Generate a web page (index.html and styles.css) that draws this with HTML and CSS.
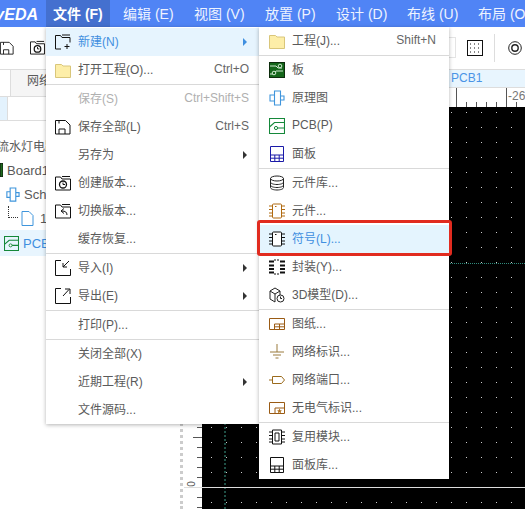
FILE: index.html
```html
<!DOCTYPE html>
<html lang="zh-CN">
<head>
    <meta charset="UTF-8">
    <meta name="viewport" content="width=device-width, initial-scale=1.0">
    <title>EasyEDA</title>
    <link rel="stylesheet" href="styles.css">
</head>
<body>
    <svg class="defs" width="0" height="0">
        <symbol id="i-folder" viewBox="0 0 16 16"><path d="M.5 2.500h6l1.500 1.500h7.500v11.500H.5z" fill="#fdeea8" stroke="#d9c67a"/></symbol>
        <symbol id="i-save" viewBox="0 0 16 16"><path d="M.5 1.500h10l4.500 4.500v9H.5zM4 15v-5h6v5M4 1.500v3" fill="#fff" stroke="#111"/></symbol>
        <symbol id="i-clock" viewBox="0 0 16 16"><path d="M.5 15V2h5l1.500 2h8.500v11zM7 1.500h8" fill="#fff" stroke="#111"/><circle cx="8" cy="9.500" r="3.500" fill="none" stroke="#111" stroke-width="1.300"/><path d="M8 7.500v2h2" fill="none" stroke="#111"/></symbol>
        <symbol id="i-chip" viewBox="0 0 16 16"><rect x="3.500" y="1" width="9" height="14" rx="1" fill="#fff" stroke="currentColor"/><path d="M0 3h3M0 6.500h3M0 10h3M0 13h3M13 3h3M13 6.500h3M13 10h3M13 13h3M6 3.500h1.500" fill="none" stroke="currentColor"/></symbol>
    </svg>

    <div class="topbar">
        <div class="logo"><span>EasyEDA</span></div>
        <div class="nav-item active">文件 (F)</div>
        <div class="nav-item">编辑 (E)</div>
        <div class="nav-item">视图 (V)</div>
        <div class="nav-item">放置 (P)</div>
        <div class="nav-item">设计 (D)</div>
        <div class="nav-item">布线 (U)</div>
        <div class="nav-item">布局 (O)</div>
    </div>

    <div class="toolbar">
        <svg class="tool" width="14" height="14"><use href="#i-save"/></svg>
        <svg class="tool tool-clock" width="15" height="15"><use href="#i-clock"/></svg>
        <div class="tool-input"></div>
        <svg class="tool tool-grid" width="16" height="16" viewBox="0 0 16 16"><rect x=".5" y=".5" width="15" height="15" fill="#fff" stroke="#111"/><path d="M3 4h2M7 4h2M11 4h2M3 8h2M7 8h2M11 8h2M3 12h2M7 12h2M11 12h2" stroke="#111" stroke-dasharray="1 1"/></svg>
        <div class="tool-sep"></div>
        <svg class="tool" width="14" height="14" viewBox="0 0 14 14"><circle cx="7" cy="7" r="6.300" fill="none" stroke="#222"/><circle cx="7" cy="7" r="3.200" fill="none" stroke="#222" stroke-width="1.400"/></svg>
    </div>

    <div class="main">
        <div class="side">
            <div class="side-tabs"><div class="side-tab">网络</div></div>
            <div class="side-search"><div class="search-mark"></div><div class="search-box"></div></div>
            <div class="tree">
                <div class="tree-row tree-title">流水灯电路</div>
                <div class="tree-row tree-board">
                    <svg width="3" height="14" viewBox="0 0 3 14"><rect width="3" height="14" fill="#1d6b1d" stroke="#111"/></svg>
                    <span>Board1</span>
                </div>
                <div class="tree-row tree-sch">
                    <svg class="blue-icon" width="15" height="15" viewBox="0 0 16 16"><path d="M5.500 1h6v14h-6zM5.500 5H2v6h3.500M11.500 6H15v4h-3.500" fill="none" stroke="currentColor" stroke-width="1.200"/></svg>
                    <span>Schematic1</span>
                </div>
                <div class="tree-row tree-page">
                    <span class="tree-link"></span>
                    <svg class="blue-icon" width="13" height="15" viewBox="0 0 13 15"><path d="M1 .5h7l4 4v10H1z" fill="none" stroke="currentColor"/></svg>
                    <span>1.P1</span>
                </div>
                <div class="tree-row tree-pcb">
                    <svg class="green-icon" width="15" height="15" viewBox="0 0 16 16"><path d="M.5.500h15v15H.5zM.5 9l5-4.500h10M6 10h9.500" fill="none" stroke="currentColor" stroke-width="1.200"/><circle cx="7" cy="10" r="1.600" fill="#fff" stroke="currentColor"/></svg>
                    <span>PCB1</span>
                </div>
            </div>
        </div>

        <div class="work">
            <div class="doc-tabs"><div class="doc-tab">PCB1</div></div>
            <div class="h-ruler"><span class="h-label">-26</span></div>
            <div class="work-body">
                <div class="v-ruler"></div>
                <div class="canvas"></div>
                <div class="line-teal-h"></div>
                <div class="line-teal-v"></div>
                <div class="axis"></div>
                <span class="axis-zero">0</span>
            </div>
        </div>
    </div>

    <div class="menu menu-file">
        <div class="item hot">
            <svg class="ic" width="16" height="16" viewBox="0 0 16 16"><path d="M6 15H.5V1.500h5l1.500 2h8v5M7 1h8M12 10v5M9.500 12.500h5" fill="none" stroke="#111"/></svg>
            <span class="label">新建(N)</span><span class="arrow"></span>
        </div>
        <div class="item">
            <svg class="ic" width="16" height="16"><use href="#i-folder"/></svg>
            <span class="label">打开工程(O)...</span><span class="key">Ctrl+O</span>
        </div>
        <div class="sep"></div>
        <div class="item off">
            <span class="ic"></span>
            <span class="label">保存(S)</span><span class="key">Ctrl+Shift+S</span>
        </div>
        <div class="item">
            <svg class="ic" width="16" height="16"><use href="#i-save"/></svg>
            <span class="label">保存全部(L)</span><span class="key">Ctrl+S</span>
        </div>
        <div class="item">
            <span class="ic"></span>
            <span class="label">另存为</span><span class="arrow"></span>
        </div>
        <div class="item">
            <svg class="ic" width="16" height="16"><use href="#i-clock"/></svg>
            <span class="label">创建版本...</span>
        </div>
        <div class="item">
            <svg class="ic" width="16" height="16" viewBox="0 0 16 16"><path d="M.5 15V2h5l1.500 2h8.500v11zM7 1.500h8" fill="#fff" stroke="#111"/><path d="M12 12c0-3-2-4-5-4M9 5.500 6 8l3 2.500" fill="none" stroke="#111"/></svg>
            <span class="label">切换版本...</span>
        </div>
        <div class="item">
            <span class="ic"></span>
            <span class="label">缓存恢复...</span>
        </div>
        <div class="sep"></div>
        <div class="item">
            <svg class="ic" width="16" height="16" viewBox="0 0 16 16"><path d="M6 .5H.5v15h15V9M14 1 8 7M8 3v4h4" fill="none" stroke="#111"/></svg>
            <span class="label">导入(I)</span><span class="arrow"></span>
        </div>
        <div class="item">
            <svg class="ic" width="16" height="16" viewBox="0 0 16 16"><path d="M6 .5H.5v15h15V9M8 8l6-6.500M10 1h5v5" fill="none" stroke="#111"/></svg>
            <span class="label">导出(E)</span><span class="arrow"></span>
        </div>
        <div class="sep"></div>
        <div class="item">
            <span class="ic"></span>
            <span class="label">打印(P)...</span>
        </div>
        <div class="sep"></div>
        <div class="item">
            <span class="ic"></span>
            <span class="label">关闭全部(X)</span>
        </div>
        <div class="item">
            <span class="ic"></span>
            <span class="label">近期工程(R)</span><span class="arrow"></span>
        </div>
        <div class="item">
            <span class="ic"></span>
            <span class="label">文件源码...</span>
        </div>
    </div>

    <div class="menu menu-new">
        <div class="item">
            <svg class="ic" width="16" height="16"><use href="#i-folder"/></svg>
            <span class="label">工程(J)...</span><span class="key">Shift+N</span>
        </div>
        <div class="sep"></div>
        <div class="item">
            <svg class="ic" width="16" height="16" viewBox="0 0 16 16"><rect x=".5" y=".5" width="15" height="15" fill="#14661a" stroke="#0c2c0c"/><path d="M1 4h6l2 2h4M1 12h3l3-3h7" fill="none" stroke="#cfe8cf"/><circle cx="11" cy="4" r="1.800" fill="#14661a" stroke="#cfe8cf"/><circle cx="5" cy="11" r="1.800" fill="#14661a" stroke="#cfe8cf"/></svg>
            <span class="label">板</span>
        </div>
        <div class="item">
            <svg class="ic blue-icon" width="16" height="16" viewBox="0 0 16 16"><path d="M5.500 1h6v14h-6zM5.500 5H1v6h4.500M11.500 6H15v4h-3.500" fill="none" stroke="currentColor" stroke-width="1.100"/></svg>
            <span class="label">原理图</span>
        </div>
        <div class="item">
            <svg class="ic green-icon" width="16" height="16" viewBox="0 0 16 16"><path d="M.5.500h15v15H.5zM.5 9l5-4.500h10M6 10h9.500" fill="none" stroke="currentColor" stroke-width="1.100"/><circle cx="7" cy="10" r="1.600" fill="#fff" stroke="currentColor"/></svg>
            <span class="label">PCB(P)</span>
        </div>
        <div class="item">
            <svg class="ic" width="16" height="16" viewBox="0 0 16 16"><path d="M1.500.5h13v15h-13zM1.500 9h13M1.500 12.200h13M5.800 9v6.500M10.200 9v6.500" fill="none" stroke="#1a1aa8"/></svg>
            <span class="label">面板</span>
        </div>
        <div class="sep"></div>
        <div class="item">
            <svg class="ic" width="16" height="16" viewBox="0 0 16 16"><ellipse cx="8" cy="3.500" rx="6.500" ry="2.500" fill="none" stroke="#222"/><path d="M1.500 3.500v9c0 1.500 3 2.500 6.500 2.500s6.500-1 6.500-2.500v-9M1.500 7c0 1.500 3 2.500 6.500 2.500S14.500 8.500 14.500 7M1.500 10c0 1.500 3 2.500 6.500 2.500s6.500-1 6.500-2.500" fill="none" stroke="#222"/></svg>
            <span class="label">元件库...</span>
        </div>
        <div class="item">
            <svg class="ic chip-orange" width="16" height="16"><use href="#i-chip"/></svg>
            <span class="label">元件...</span>
        </div>
        <div class="item sel">
            <svg class="ic chip-black" width="16" height="16"><use href="#i-chip"/></svg>
            <span class="label">符号(L)...</span>
        </div>
        <div class="item">
            <svg class="ic" width="16" height="16" viewBox="0 0 16 16"><path d="M0 2.500h5M11 2.500h5M0 6.500h5M11 6.500h5M0 10h5M11 10h5M0 13.500h5M11 13.500h5" stroke="#111" stroke-width="2"/><path d="M5 1h6M5 15h6" stroke="#111" stroke-dasharray="2 1"/></svg>
            <span class="label">封装(Y)...</span>
        </div>
        <div class="item">
            <svg class="ic" width="16" height="16" viewBox="0 0 16 16"><path d="M1 4l5-3 5 3v5M1 4v8l5 3M1 4l5 3 5-3M6 7v8" fill="none" stroke="#222"/><circle cx="11.500" cy="11.500" r="3.500" fill="#fff" stroke="#222"/><path d="M11.500 9.500v2h1.500" fill="none" stroke="#222"/></svg>
            <span class="label">3D模型(D)...</span>
        </div>
        <div class="sep"></div>
        <div class="item">
            <svg class="ic" width="16" height="16" viewBox="0 0 16 16"><path d="M.5 2.500h15v11H.5zM5.500 13.500V8h10M5.500 10.800h10M10.500 8v5.500" fill="none" stroke="#9a5b14"/></svg>
            <span class="label">图纸...</span>
        </div>
        <div class="item">
            <svg class="ic" width="16" height="16" viewBox="0 0 16 16"><path d="M8 0v8M1 8h14M4 11h8M6.500 14h3" fill="none" stroke="#9a7a3c"/></svg>
            <span class="label">网络标识...</span>
        </div>
        <div class="item">
            <svg class="ic" width="16" height="16" viewBox="0 0 16 16"><path d="M0 8h3.500M3.500 4.500h9L15.500 8l-3 3.500h-9z" fill="none" stroke="#9a6a1c"/></svg>
            <span class="label">网络端口...</span>
        </div>
        <div class="item">
            <svg class="ic" width="16" height="16" viewBox="0 0 16 16"><path d="M.5 2.500h15v11H.5zM6 13.500V8h9.500" fill="none" stroke="#9a5b14"/><path d="M10.500 8.500l.8 1.700 1.700.2-1.300 1.100.4 1.700-1.600-.9-1.600.9.400-1.700L8 10.400l1.700-.2z" fill="#b0701c"/></svg>
            <span class="label">无电气标识...</span>
        </div>
        <div class="sep"></div>
        <div class="item">
            <svg class="ic chip-black" width="16" height="16" viewBox="0 0 16 16"><path d="M3.500 1h9v14h-9zM6 4h4v8H6zM0 3h3M0 6.500h3M0 10h3M0 13h3M13 3h3M13 6.500h3M13 10h3M13 13h3" fill="none" stroke="currentColor"/></svg>
            <span class="label">复用模块...</span>
        </div>
        <div class="item">
            <svg class="ic" width="16" height="16" viewBox="0 0 16 16"><path d="M1.500.5h13v15h-13zM1.500 9h13M1.500 12.200h13M5.800 9v6.500M10.200 9v6.500" fill="none" stroke="#111"/></svg>
            <span class="label">面板库...</span>
        </div>
    </div>

    <div class="highlight"></div>
</body>
</html>
```

FILE: styles.css
```css
* {
    box-sizing: border-box;
}
html, body {
    height: 100%;
}
body {
    margin: 0;
    display: flex;
    flex-direction: column;
    overflow: hidden;
    position: relative;
    background: #fff;
    color: #5a5a5a;
    font-family: "Liberation Sans", "Noto Sans CJK SC", sans-serif;
    font-size: 12px;
}
.defs {
    position: absolute;
}

/* top bar */
.topbar {
    flex: none;
    display: flex;
    height: 27px;
    background: #5084f5;
    color: #fff;
    white-space: nowrap;
}
.logo {
    flex: none;
    display: flex;
    justify-content: flex-end;
    width: 38px;
    margin-right: 8px;
    overflow: hidden;
    font: italic bold 16px/29px "Liberation Sans", sans-serif;
}
.nav-item {
    flex: none;
    width: 71px;
    line-height: 29px;
    font-size: 14px;
    color: #eef3ff;
}
.nav-item.active {
    width: 64px;
    margin-right: 13px;
    padding-left: 7px;
    background: #4470cf;
    font-weight: 700;
    color: #fff;
}

/* toolbar */
.toolbar {
    flex: none;
    display: flex;
    align-items: center;
    height: 43px;
    padding-bottom: 1px;
    border-bottom: 1px solid #ddd;
}
.tool {
    flex: none;
}
.tool-clock {
    margin-left: 16px;
}
.tool-input {
    width: 12px;
    height: 21px;
    margin-left: auto;
    border: 1px solid #e4e4e4;
}
.tool-grid {
    margin-left: 11px;
}
.tool-sep {
    width: 1px;
    height: 28px;
    margin: 0 13px 0 11px;
    background: #ddd;
}
.toolbar > svg:last-child {
    margin-right: 3px;
}

/* main area */
.main {
    flex: 1;
    display: flex;
    min-height: 0;
}
.side {
    flex: none;
    width: 183px;
    border-right: 3px dotted #ccc;
    overflow: hidden;
}
.side-tabs {
    height: 27px;
    padding-left: 10px;
    border-bottom: 1px solid #ddd;
}
.side-tab {
    width: 60px;
    height: 27px;
    padding-left: 16px;
    line-height: 23px;
    border: 1px solid #ddd;
    border-top: 0;
    background: #f5f5f5;
}
.side-search {
    display: flex;
    height: 24px;
}
.search-mark {
    width: 7px;
    background: #e3f2fd;
    border-bottom: 1px solid #ddd;
}
.search-box {
    flex: 1;
    border-bottom: 1px solid #ddd;
    border-left: 1px solid #ddd;
}
.tree {
    padding-top: 12px;
    font-size: 13px;
}
.tree-row {
    display: flex;
    align-items: center;
    gap: 4px;
    height: 24px;
    white-space: nowrap;
}
.tree-title {
    margin-left: -3px;
    height: 25px;
    font-size: 12px;
}
.tree-sch {
    padding-left: 5px;
}
.tree-page {
    padding-left: 8px;
    gap: 6px;
}
.tree-link {
    flex: none;
    width: 10px;
    height: 12px;
    margin: 0 -3px 12px 0;
    border-left: 1px dotted #333;
    border-bottom: 1px dotted #333;
}
.tree-pcb {
    height: 26px;
    padding-left: 4px;
    background: #e8f5fe;
    color: #3f8fe0;
}
.blue-icon {
    color: #3f95dc;
}
.green-icon {
    color: #15883a;
}

/* document tabs and rulers */
.work {
    flex: 1;
    display: flex;
    flex-direction: column;
    min-width: 0;
}
.doc-tabs {
    flex: none;
    display: flex;
    justify-content: flex-end;
    height: 18px;
    background: #e8f5fe;
    border-bottom: 1px solid #ddd;
}
.doc-tab {
    width: 76px;
    padding-left: 2px;
    line-height: 17px;
    color: #4a94e6;
}
.h-ruler {
    flex: none;
    height: 19px;
    position: relative;
    background:
        repeating-linear-gradient(90deg, #555 0 1px, transparent 1px 50px) 23px 0 / 100% 100%,
        repeating-linear-gradient(90deg, #555 0 1px, transparent 1px 10px) 3px 14px / 100% 5px repeat-x,
        #fff;
}
.h-label {
    position: absolute;
    left: 325px;
    top: 0;
    font: 12px/16px "Liberation Sans", sans-serif;
    color: #777;
}
.work-body {
    flex: 1;
    display: flex;
    position: relative;
    min-height: 0;
}
.v-ruler {
    flex: none;
    width: 19px;
    background:
        repeating-linear-gradient(180deg, #555 0 1px, transparent 1px 50px) 10px 30px / 9px 100% repeat-y,
        repeating-linear-gradient(180deg, #555 0 1px, transparent 1px 10px) 14px 0 / 5px 100% repeat-y,
        #fff;
}
.canvas {
    flex: 1;
    background:
        radial-gradient(circle at 0.500px 0.500px, #ccc 0.700px, transparent 0.900px) 9px 5px / 15px 15px,
        #000;
}
.axis {
    position: absolute;
    left: 1px;
    right: 0;
    top: 380px;
    height: 1px;
    background: #ddd;
}
.axis-zero {
    position: absolute;
    left: 6px;
    top: 372px;
    transform: rotate(-90deg);
    font: 10px/10px "Liberation Sans", sans-serif;
    color: #555;
}
.line-teal-h {
    position: absolute;
    left: 19px;
    right: 0;
    top: 156px;
    border-top: 1px dotted #2f8a7c;
}
.line-teal-v {
    position: absolute;
    left: 41px;
    top: 0;
    bottom: 0;
    border-left: 2px dotted #1f4f45;
}

/* menus */
.menu {
    position: absolute;
    top: 27px;
    background: #fff;
    box-shadow: 0 1px 4px rgba(0, 0, 0, 0.3);
}
.menu-file {
    left: 46px;
    width: 213px;
    padding-top: 1px;
}
.menu-new {
    left: 259px;
    width: 190px;
}
.item {
    display: flex;
    align-items: center;
    height: 28px;
    padding: 0 10px 0 9px;
    white-space: nowrap;
}
.menu-new .item {
    padding: 0 13px 0 10px;
}
.ic {
    flex: none;
    width: 16px;
    height: 16px;
    margin-right: 7px;
}
.label {
    margin-bottom: 3px;
}
.chip-orange {
    color: #b06a10;
}
.chip-black {
    color: #111;
}
.key {
    margin: 0 0 3px auto;
    color: #666;
}
.arrow {
    margin: 0 2px 0 auto;
    border-left: 4px solid #333;
    border-top: 4px solid transparent;
    border-bottom: 4px solid transparent;
}
.sep {
    height: 1px;
    background: #d9d9d9;
}
.item.hot {
    background: #e6f4fe;
    color: #3f8fe0;
}
.item.hot .arrow {
    border-left-color: #3f8fe0;
}
.item.sel {
    background: #e4f4fe;
    color: #3f8fe0;
}
.item.off,
.item.off .key {
    color: #b0b0b0;
}
.highlight {
    position: absolute;
    left: 257px;
    top: 220px;
    width: 195px;
    height: 36px;
    border: 3px solid #e12b1f;
    border-radius: 3px;
}
```
